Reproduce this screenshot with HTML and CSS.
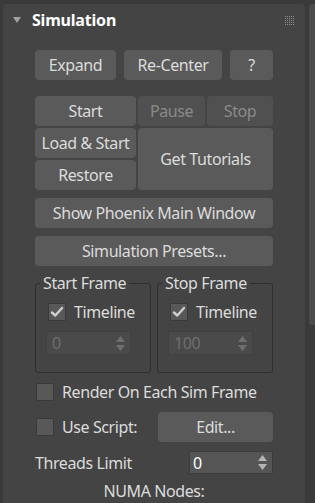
FILE: index.html
```html
<!DOCTYPE html>
<html>
<head>
<meta charset="utf-8">
<link rel="stylesheet" href="styles.css">
</head>
<body>
<div class="app">
  <div class="panel">
    <div class="header">
      <svg class="caret" width="8" height="6" viewBox="0 0 8 6"><path d="M0 0H8L4 6Z" fill="#a0a0a0"/></svg>
      <span class="title">Simulation</span>
      <svg class="grip" width="9" height="9" viewBox="0 0 9 9">
        <defs><pattern id="dots" width="2" height="2" patternUnits="userSpaceOnUse"><rect width="1" height="1" fill="#8e8e8e"/></pattern></defs>
        <rect width="9" height="9" fill="url(#dots)"/>
      </svg>
    </div>
    <div class="content">
      <div class="row row1">
        <button class="btn w81">Expand</button>
        <button class="btn w98">Re-Center</button>
        <button class="btn w43">?</button>
      </div>
      <div class="row row2">
        <button class="btn w101">Start</button>
        <button class="btn w67 disabled">Pause</button>
        <button class="btn w66 disabled">Stop</button>
      </div>
      <div class="grid">
        <button class="btn">Load &amp; Start</button>
        <button class="btn tall">Get Tutorials</button>
        <button class="btn">Restore</button>
      </div>
      <button class="btn full">Show Phoenix Main Window</button>
      <button class="btn full">Simulation Presets...</button>
      <div class="groups">
        <fieldset class="group">
          <legend>Start Frame</legend>
          <div class="gbody">
            <div class="check-row">
              <span class="cb"><svg width="16" height="16" viewBox="0 0 16 16"><path d="M3 8.5L6.3 11.5L13 4" fill="none" stroke="#cfcfcf" stroke-width="2.4" stroke-linecap="round" stroke-linejoin="round"/></svg></span>
              <span class="lbl">Timeline</span>
            </div>
            <div class="spin disabled w85">
              <span class="val">0</span>
              <svg width="9" height="15" viewBox="0 0 9 15"><path d="M0 6L4.5 0L9 6Z M0 9L9 9L4.5 15Z" fill="#6e6e6e"/></svg>
            </div>
          </div>
        </fieldset>
        <fieldset class="group">
          <legend>Stop Frame</legend>
          <div class="gbody">
            <div class="check-row">
              <span class="cb"><svg width="16" height="16" viewBox="0 0 16 16"><path d="M3 8.5L6.3 11.5L13 4" fill="none" stroke="#cfcfcf" stroke-width="2.4" stroke-linecap="round" stroke-linejoin="round"/></svg></span>
              <span class="lbl">Timeline</span>
            </div>
            <div class="spin disabled w85">
              <span class="val">100</span>
              <svg width="9" height="15" viewBox="0 0 9 15"><path d="M0 6L4.5 0L9 6Z M0 9L9 9L4.5 15Z" fill="#6e6e6e"/></svg>
            </div>
          </div>
        </fieldset>
      </div>
      <div class="opt-row render-row">
        <span class="cb"></span>
        <span class="lbl">Render On Each Sim Frame</span>
      </div>
      <div class="opt-row script-row">
        <span class="cb"></span>
        <span class="lbl">Use Script:</span>
        <button class="btn edit">Edit...</button>
      </div>
      <div class="opt-row threads-row">
        <span class="lbl">Threads Limit</span>
        <div class="spin threads">
          <span class="val">0</span>
          <svg width="9" height="15" viewBox="0 0 9 15"><path d="M0 6L4.5 0L9 6Z M0 9L9 9L4.5 15Z" fill="#b4b4b4"/></svg>
        </div>
      </div>
      <div class="numa">NUMA Nodes:</div>
    </div>
  </div>
  <div class="scroll"><div class="thumb"></div></div>
</div>
</body>
</html>
```
FILE: styles.css
```css
* { box-sizing: border-box; }
html, body { margin: 0; padding: 0; }
body {
  background: #3a3a3a;
  font-family: "Noto Sans", "Open Sans", sans-serif;
  font-size: 16px;
  letter-spacing: -0.4px;
  color: #dcdcdc;
  overflow: hidden;
  width: 315px;
  height: 503px;
}
.app { display: flex; height: 503px; padding-top: 4px; }
.panel {
  margin-left: 3px;
  width: 302px;
  background: #444444;
  border-radius: 4px 4px 0 0;
}
.scroll { margin-left: 4px; width: 6px; }
.thumb {
  height: 321px;
  background: #4b4b4b;
  border-radius: 3px 0 0 3px;
}
.header {
  height: 32px;
  display: flex;
  align-items: center;
  padding: 0 11px 0 10px;
}
.caret { display: block; }
.title {
  margin-left: 11px;
  font-weight: 700;
  color: #ffffff;
  letter-spacing: -0.2px;
  line-height: 16px;
}
.grip { margin-left: auto; display: block; }
.content {
  padding: 0 32px;
  display: flex;
  flex-direction: column;
}
.btn {
  font: inherit;
  letter-spacing: inherit;
  color: #dcdcdc;
  background: #5a5a5a;
  border: none;
  border-radius: 4px;
  padding: 0;
  height: 30px;
  line-height: 30px;
  text-align: center;
  white-space: nowrap;
}
.btn.disabled { background: #505050; color: #8a8a8a; }
.row { display: flex; }
.row1 { margin-top: 14px; gap: 8px; }
.row2 { margin-top: 16px; gap: 2px; }
.w81 { width: 81px; }
.w98 { width: 98px; }
.w43 { width: 43px; }
.w101 { width: 101px; }
.w67 { width: 67px; }
.w66 { width: 66px; }
.grid {
  margin-top: 2px;
  display: grid;
  grid-template-columns: 101px 135px;
  grid-template-rows: 30px 30px;
  gap: 2px;
}
.grid .tall { grid-row: 1 / span 2; grid-column: 2; height: 62px; line-height: 62px; }
.full { margin-top: 8px; width: 100%; }
.groups { margin-top: 9px; display: flex; gap: 6px; }
.group {
  margin: 0;
  padding: 0;
  width: 116px;
  border: 1px solid #2f2f2f;
  border-radius: 3px;
  min-width: 0;
}
.group legend {
  margin-left: 4px;
  padding: 0 3px;
  line-height: 16px;
  font-size: 16px;
}
.gbody { padding: 11px 0 17px 10px; }
.check-row { display: flex; align-items: center; height: 20px; margin-left: 2px; }
.cb {
  width: 18px;
  height: 18px;
  background: #585858;
  border: 1px solid #3a3a3a;
  display: flex;
  align-items: center;
  justify-content: center;
  flex: none;
}
.cb svg { display: block; }
.lbl { margin-left: 8px; line-height: 16px; white-space: nowrap; }
.spin {
  height: 24px;
  display: flex;
  align-items: center;
  justify-content: space-between;
  padding: 0 5px 0 5px;
  background: #555555;
  border: 1px solid #3c3c3c;
  color: #ffffff;
}
.spin svg { display: block; }
.spin.disabled { background: #4a4a4a; border-color: #404040; color: #6e6e6e; margin-top: 9px; }
.w85 { width: 85px; }
.opt-row { display: flex; align-items: center; }
.render-row { margin-top: 10px; height: 18px; padding-left: 1px; }
.script-row { margin-top: 11px; height: 30px; padding-left: 1px; }
.edit { margin-left: auto; width: 115px; }
.threads-row { margin-top: 9px; height: 23px; }
.threads-row .lbl { margin-left: 0; }
.threads { margin-left: auto; width: 84px; height: 23px; padding-left: 3px; padding-right: 5px; }
.numa { margin-top: 9px; line-height: 16px; text-align: center; }
```
